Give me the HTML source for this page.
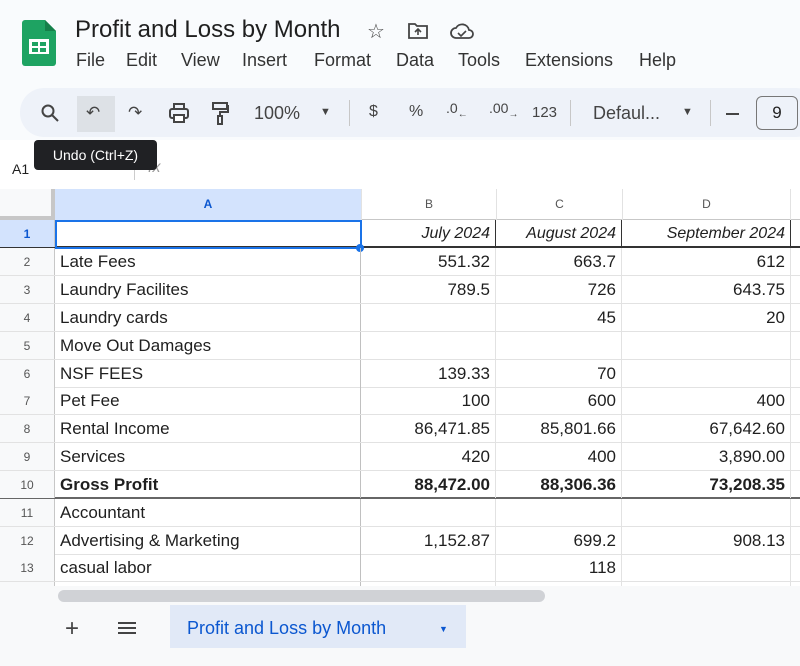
<!DOCTYPE html>
<html><head><meta charset="utf-8"><style>
*{margin:0;padding:0;box-sizing:border-box}
body{width:800px;height:666px;overflow:hidden;background:#f9fbfd;font-family:"Liberation Sans",Arial,sans-serif;color:#1f1f1f;position:relative}
.a{position:absolute;white-space:nowrap}
.menu{font-size:18px;color:#333;top:50px}
.tb{font-size:17px;color:#444}
.grid{position:absolute;left:0;top:189px;width:800px;height:402px;background:#fff;overflow:hidden}
.row{position:absolute;left:0;width:800px;height:28px;border-bottom:1px solid #e2e2e2;font-size:17px}
.row div{position:absolute;top:0;height:27px;line-height:28px;padding:0 5px}
.rh{left:0;width:55px;text-align:center;font-size:12px !important;color:#555;background:#f8f9fa;border-right:1px solid #c7c7c7}
.ca{left:55px;width:306px;border-right:1px solid #c0c0c0}
.cb{left:361px;width:135px;text-align:right;border-right:1px solid #e2e2e2}
.cc{left:496px;width:126px;text-align:right;border-right:1px solid #e2e2e2}
.cd{left:622px;width:169px;text-align:right;border-right:1px solid #e2e2e2}
</style></head><body>
<svg class="a" style="left:22px;top:20px" width="34" height="46" viewBox="0 0 34 46"><path d="M3 0h20l11 11v32a3 3 0 0 1-3 3H3a3 3 0 0 1-3-3V3a3 3 0 0 1 3-3z" fill="#1ea362"/><path d="M23 0l11 11H23z" fill="#15804a"/><rect x="7" y="19" width="20" height="15" fill="#fff"/><rect x="10" y="22" width="6" height="4" fill="#1ea362"/><rect x="18" y="22" width="6" height="4" fill="#1ea362"/><rect x="10" y="28" width="6" height="4" fill="#1ea362"/><rect x="18" y="28" width="6" height="4" fill="#1ea362"/></svg>
<div class="a" style="left:75px;top:16px;font-size:24px">Profit and Loss by Month</div>
<div class="a" style="left:367px;top:19px;font-size:20px;color:#444">☆</div>
<svg class="a" style="left:408px;top:22px" width="20" height="18" viewBox="0 0 20 18"><path d="M1 2h6l2 2h10v12H1z" fill="none" stroke="#444" stroke-width="1.8"/><path d="M10 13V7M7 10l3-3 3 3" fill="none" stroke="#444" stroke-width="1.6"/></svg>
<svg class="a" style="left:450px;top:22px" width="24" height="18" viewBox="0 0 24 18"><path d="M6 16a5 5 0 0 1 0-10 7 7 0 0 1 13 2 4 4 0 0 1 0 8z" fill="none" stroke="#444" stroke-width="1.8"/><path d="M8 11l3 3 5-5" fill="none" stroke="#444" stroke-width="1.6"/></svg>
<div class="a menu" style="left:76px">File</div>
<div class="a menu" style="left:126px">Edit</div>
<div class="a menu" style="left:181px">View</div>
<div class="a menu" style="left:242px">Insert</div>
<div class="a menu" style="left:314px">Format</div>
<div class="a menu" style="left:396px">Data</div>
<div class="a menu" style="left:458px">Tools</div>
<div class="a menu" style="left:525px">Extensions</div>
<div class="a menu" style="left:639px">Help</div>
<div class="a" style="left:20px;top:88px;width:800px;height:49px;background:#eef2f9;border-radius:24px"></div>
<div class="a" style="left:77px;top:96px;width:38px;height:36px;background:#dde1e6"></div>
<svg class="a" style="left:40px;top:103px" width="20" height="20" viewBox="0 0 20 20"><circle cx="8" cy="8" r="5.5" fill="none" stroke="#444" stroke-width="2"/><path d="M12 12l6 6" stroke="#444" stroke-width="2"/></svg>
<div class="a tb" style="left:86px;top:103px">↶</div>
<div class="a tb" style="left:128px;top:103px">↷</div>
<svg class="a" style="left:168px;top:103px" width="22" height="20" viewBox="0 0 22 20"><rect x="2" y="6" width="18" height="9" rx="2" fill="none" stroke="#444" stroke-width="2"/><rect x="6" y="1" width="10" height="5" fill="none" stroke="#444" stroke-width="2"/><rect x="6" y="12" width="10" height="7" fill="#fff" stroke="#444" stroke-width="2"/></svg>
<svg class="a" style="left:211px;top:101px" width="18" height="24" viewBox="0 0 18 24"><rect x="2" y="2" width="14" height="6" fill="none" stroke="#444" stroke-width="2"/><path d="M16 5h1v6H9v4" fill="none" stroke="#444" stroke-width="2"/><rect x="7" y="15" width="4" height="8" fill="none" stroke="#444" stroke-width="2"/></svg>
<div class="a tb" style="left:254px;top:103px;font-size:18px">100%</div>
<div class="a" style="left:320px;top:106px;font-size:11px;color:#444">▼</div>
<div class="a" style="left:349px;top:100px;width:1px;height:26px;background:#c7c7c7"></div>
<div class="a tb" style="left:369px;top:103px;font-size:16px">$</div>
<div class="a tb" style="left:409px;top:103px;font-size:16px">%</div>
<div class="a tb" style="left:446px;top:100px;font-size:14px">.0<sub style="font-size:10px">←</sub></div>
<div class="a tb" style="left:489px;top:100px;font-size:14px">.00<sub style="font-size:10px">→</sub></div>
<div class="a tb" style="left:532px;top:104px;font-size:15px">123</div>
<div class="a" style="left:570px;top:100px;width:1px;height:26px;background:#c7c7c7"></div>
<div class="a tb" style="left:593px;top:103px;font-size:18px">Defaul...</div>
<div class="a" style="left:682px;top:106px;font-size:11px;color:#444">▼</div>
<div class="a" style="left:710px;top:100px;width:1px;height:26px;background:#c7c7c7"></div>
<div class="a" style="left:726px;top:113px;width:13px;height:2px;background:#444"></div>
<div class="a" style="left:756px;top:96px;width:42px;height:34px;border:1.5px solid #777;border-radius:6px;text-align:center;line-height:31px;font-size:17px">9</div>
<div class="a" style="left:0;top:140px;width:800px;height:49px;background:#fff"></div>
<div class="a" style="left:12px;top:161px;font-size:14px">A1</div>
<div class="a" style="left:134px;top:158px;width:1px;height:22px;background:#ccc"></div>
<div class="a" style="left:148px;top:159px;font-size:16px;color:#999;font-style:italic">fx</div>
<div class="a" style="left:34px;top:140px;width:123px;height:30px;background:#202124;border-radius:4px;color:#fff;font-size:14px;line-height:30px;text-align:center">Undo (Ctrl+Z)</div>
<div class="grid">
<div class="a" style="left:0;top:0;width:800px;height:31px;border-bottom:1px solid #c7c7c7;background:#fff"></div>
<div class="a" style="left:0;top:0;width:55px;height:31px;background:#f8f9fa;border-right:4px solid #c7c7c7;border-bottom:4px solid #c7c7c7"></div>
<div class="a" style="left:55px;top:0;width:306px;height:31px;background:#d3e3fd;text-align:center;line-height:31px;font-size:12px;font-weight:bold;color:#0b57d0">A</div>
<div class="a" style="left:361px;top:0;width:135px;height:31px;text-align:center;line-height:31px;font-size:12px;color:#555;border-left:1px solid #e2e2e2">B</div>
<div class="a" style="left:496px;top:0;width:126px;height:31px;text-align:center;line-height:31px;font-size:12px;color:#555;border-left:1px solid #e2e2e2">C</div>
<div class="a" style="left:622px;top:0;width:169px;height:31px;text-align:center;line-height:31px;font-size:12px;color:#555;border-left:1px solid #e2e2e2;border-right:1px solid #e2e2e2">D</div>
<div class="row" style="top:31px;border-bottom:2px solid #333;font-size:16px"><div class="rh" style="background:#d3e3fd;color:#0b57d0;font-weight:bold">1</div><div class="ca"></div><div class="cb" style="font-style:italic;border-right-color:#333">July 2024</div><div class="cc" style="font-style:italic;border-right-color:#333">August 2024</div><div class="cd" style="font-style:italic;border-right-color:#333">September 2024</div></div>
<div class="a" style="left:55px;top:31px;width:307px;height:29px;border:2px solid #1a73e8"></div>
<div class="a" style="left:356px;top:55px;width:8px;height:8px;border-radius:50%;background:#1a73e8"></div>
<div class="row" style="top:59px"><div class="rh">2</div><div class="ca">Late Fees</div><div class="cb">551.32</div><div class="cc">663.7</div><div class="cd">612</div></div>
<div class="row" style="top:87px"><div class="rh">3</div><div class="ca">Laundry Facilites</div><div class="cb">789.5</div><div class="cc">726</div><div class="cd">643.75</div></div>
<div class="row" style="top:115px"><div class="rh">4</div><div class="ca">Laundry cards</div><div class="cb"></div><div class="cc">45</div><div class="cd">20</div></div>
<div class="row" style="top:143px"><div class="rh">5</div><div class="ca">Move Out Damages</div><div class="cb"></div><div class="cc"></div><div class="cd"></div></div>
<div class="row" style="top:171px"><div class="rh">6</div><div class="ca">NSF FEES</div><div class="cb">139.33</div><div class="cc">70</div><div class="cd"></div></div>
<div class="row" style="top:198px"><div class="rh">7</div><div class="ca">Pet Fee</div><div class="cb">100</div><div class="cc">600</div><div class="cd">400</div></div>
<div class="row" style="top:226px"><div class="rh">8</div><div class="ca">Rental Income</div><div class="cb">86,471.85</div><div class="cc">85,801.66</div><div class="cd">67,642.60</div></div>
<div class="row" style="top:254px"><div class="rh">9</div><div class="ca">Services</div><div class="cb">420</div><div class="cc">400</div><div class="cd">3,890.00</div></div>
<div class="row" style="top:282px;font-weight:bold;border-bottom:2px solid #666"><div class="rh" style="font-weight:normal">10</div><div class="ca">Gross Profit</div><div class="cb">88,472.00</div><div class="cc">88,306.36</div><div class="cd">73,208.35</div></div>
<div class="row" style="top:310px"><div class="rh">11</div><div class="ca">Accountant</div><div class="cb"></div><div class="cc"></div><div class="cd"></div></div>
<div class="row" style="top:338px"><div class="rh">12</div><div class="ca">Advertising &amp; Marketing</div><div class="cb">1,152.87</div><div class="cc">699.2</div><div class="cd">908.13</div></div>
<div class="row" style="top:365px"><div class="rh">13</div><div class="ca">casual labor</div><div class="cb"></div><div class="cc">118</div><div class="cd"></div></div>
<div class="row" style="top:393px"><div class="rh"></div><div class="ca"></div><div class="cb"></div><div class="cc"></div><div class="cd"></div></div>
</div>
<div class="a" style="left:0;top:586px;width:800px;height:18px;background:#f8f9fa"></div>
<div class="a" style="left:58px;top:590px;width:487px;height:12px;border-radius:6px;background:#d0d2d6"></div>
<div class="a" style="left:0;top:604px;width:800px;height:62px;background:#f8f9fa"></div>
<div class="a" style="left:65px;top:615px;font-size:24px;color:#444">+</div>
<div class="a" style="left:118px;top:622px;width:18px;height:2px;background:#444;box-shadow:0 5px 0 #444,0 10px 0 #444"></div>
<div class="a" style="left:170px;top:605px;width:296px;height:43px;background:#e1e9f7"></div>
<div class="a" style="left:187px;top:618px;font-size:18px;color:#0b57d0;font-weight:500">Profit and Loss by Month</div>
<div class="a" style="left:439px;top:624px;font-size:9px;color:#0b57d0">▼</div>
</body></html>
